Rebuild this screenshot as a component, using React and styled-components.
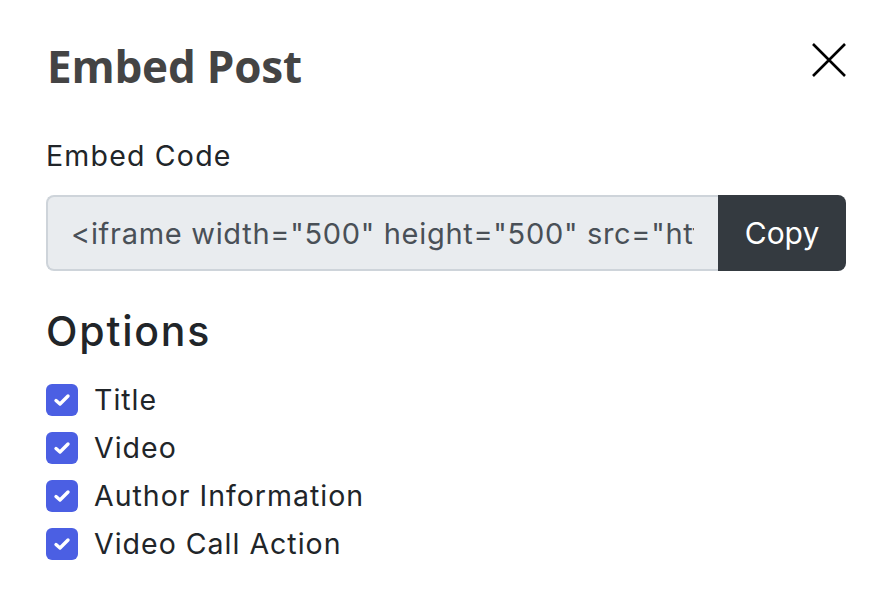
import styled, { createGlobalStyle } from "styled-components"

const GlobalStyle = createGlobalStyle`
  html, body {
    margin: 0;
    padding: 0;
    background: #fff;
  }
  body {
    font-family: Inter, "Liberation Sans", sans-serif;
    color: #212529;
  }
`

const Modal = styled.div`
  width: 894px;
  height: 594px;
  box-sizing: border-box;
  padding: 34px 48px 0 46px;
  background: #fff;
`

const Header = styled.div`
  display: flex;
  justify-content: space-between;
  align-items: flex-start;
  padding-left: 1px;
`

const Title = styled.h1`
  margin: 0;
  font-family: "Open Sans", sans-serif;
  font-weight: 700;
  font-size: 44px;
  line-height: 64px;
  color: #444;
  letter-spacing: -0.2px;
`

const CloseButton = styled.button`
  border: none;
  background: none;
  padding: 0;
  margin-top: 9px;
  margin-right: -1px;
  width: 36px;
  height: 36px;
  cursor: pointer;
  display: flex;
`

const Label = styled.label`
  display: block;
  margin-top: 40px;
  font-size: 28.5px;
  line-height: 36px;
  letter-spacing: 1.2px;
  color: #212529;
`

const InputGroup = styled.div`
  display: flex;
  margin-top: 21px;
  height: 76px;
`

const CodeInput = styled.input`
  flex: 1;
  min-width: 0;
  box-sizing: border-box;
  border: 2px solid #ced4da;
  border-right: none;
  border-radius: 8px 0 0 8px;
  background: #e9ecef;
  color: #495057;
  font-family: Inter, "Liberation Sans", sans-serif;
  font-size: 29px;
  letter-spacing: 0.7px;
  padding: 0 24px 0 23px;
  outline: none;
`

const CopyButton = styled.button`
  width: 128px;
  border: none;
  border-radius: 0 8px 8px 0;
  background: #343a40;
  color: #fff;
  font-family: Inter, "Liberation Sans", sans-serif;
  font-size: 30px;
  cursor: pointer;
`

const Heading = styled.h2`
  margin: 34px 0 0;
  font-size: 41px;
  font-weight: 500;
  line-height: 52px;
  color: #212529;
  letter-spacing: 1.8px;
`

const OptionList = styled.div`
  display: flex;
  flex-direction: column;
  gap: 16px;
  margin-top: 27px;
`

const Option = styled.label`
  display: flex;
  align-items: center;
  gap: 16px;
  font-size: 28.5px;
  line-height: 32px;
  letter-spacing: 1px;
  color: #212529;
`

const Box = styled.span`
  width: 32px;
  height: 32px;
  border-radius: 6px;
  background: #4b5fe3;
  display: flex;
  align-items: center;
  justify-content: center;
  flex-shrink: 0;
`

function Check() {
  return (
    <Box>
      <svg width="20" height="16" viewBox="0 0 20 16">
        <path d="M4 8.5 L8 12 L16 4" fill="none" stroke="#fff" strokeWidth="3.4" strokeLinecap="round" strokeLinejoin="round" />
      </svg>
    </Box>
  )
}

const options = ["Title", "Video", "Author Information", "Video Call Action"]

export default function App() {
  return (
    <>
      <GlobalStyle />
      <Modal>
        <Header>
          <Title>Embed Post</Title>
          <CloseButton aria-label="Close">
            <svg width="36" height="36" viewBox="0 0 36 36">
              <path d="M2 1 L34 33 M34 1 L2 33" stroke="#000" strokeWidth="2.6" />
            </svg>
          </CloseButton>
        </Header>
        <Label>Embed Code</Label>
        <InputGroup>
          <CodeInput readOnly value={'<iframe width="500" height="500" src="https://example.com/embed/post"></iframe>'} />
          <CopyButton>Copy</CopyButton>
        </InputGroup>
        <Heading>Options</Heading>
        <OptionList>
          {options.map((o) => (
            <Option key={o}>
              <Check />
              {o}
            </Option>
          ))}
        </OptionList>
      </Modal>
    </>
  )
}
